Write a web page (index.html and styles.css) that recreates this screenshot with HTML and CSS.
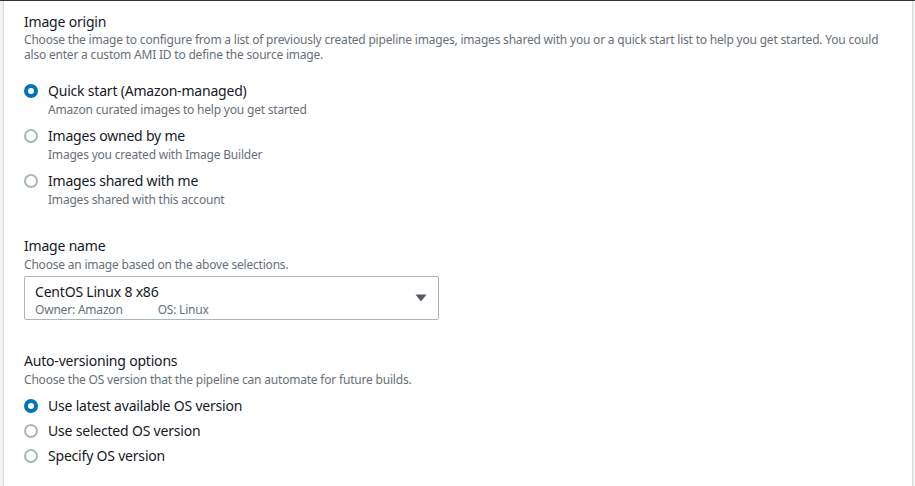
FILE: index.html
```html
<!DOCTYPE html>
<html>
<head>
<meta charset="utf-8">
<link rel="stylesheet" href="styles.css">
</head>
<body>
<div class="page">
  <div class="card">
    <section class="field field-origin">
      <div class="label">Image origin</div>
      <div class="desc">Choose the image to configure from a list of previously created pipeline images, images shared with you or a quick start list to help you get started. You could also enter a custom AMI ID to define the source image.</div>
      <div class="tiles">
        <div class="option">
          <span class="radio checked"></span>
          <div class="opt-text">
            <div class="opt-label">Quick start (Amazon-managed)</div>
            <div class="opt-desc">Amazon curated images to help you get started</div>
          </div>
        </div>
        <div class="option">
          <span class="radio"></span>
          <div class="opt-text">
            <div class="opt-label">Images owned by me</div>
            <div class="opt-desc">Images you created with Image Builder</div>
          </div>
        </div>
        <div class="option">
          <span class="radio"></span>
          <div class="opt-text">
            <div class="opt-label">Images shared with me</div>
            <div class="opt-desc">Images shared with this account</div>
          </div>
        </div>
      </div>
    </section>

    <section class="field field-name">
      <div class="label">Image name</div>
      <div class="desc">Choose an image based on the above selections.</div>
      <div class="select">
        <div class="sel-text">
          <div class="sel-main">CentOS Linux 8 x86</div>
          <div class="sel-tags"><span>Owner: Amazon</span><span>OS: Linux</span></div>
        </div>
        <svg class="caret" width="12" height="8" viewBox="0 0 12 8"><path d="M0.5 0.5 H11.5 L6 7.5 Z" fill="#545b64"/></svg>
      </div>
    </section>

    <section class="field field-auto">
      <div class="label">Auto-versioning options</div>
      <div class="desc">Choose the OS version that the pipeline can automate for future builds.</div>
      <div class="simple">
        <div class="option small"><span class="radio checked"></span><div class="opt-label">Use latest available OS version</div></div>
        <div class="option small"><span class="radio"></span><div class="opt-label">Use selected OS version</div></div>
        <div class="option small"><span class="radio"></span><div class="opt-label">Specify OS version</div></div>
      </div>
    </section>
  </div>
</div>
</body>
</html>
```
FILE: styles.css
```css
html, body {
  margin: 0;
  padding: 0;
  height: 100%;
}
body {
  background: #f2f3f3;
  font-family: "Noto Sans", "Open Sans", sans-serif;
  color: #16191f;
  letter-spacing: -0.2px;
}
.page {
  height: 100%;
  border-top: 1px solid #2f3640;
  padding: 0 2px 0 3px;
  box-sizing: border-box;
}
.card {
  height: 100%;
  background: #fff;
  border-left: 1px solid #d5dbdb;
  border-right: 1px solid #d5dbdb;
  padding: 11px 20px 0 20px;
  box-sizing: border-box;
}
.field {
  display: flex;
  flex-direction: column;
}
.label {
  font-size: 14px;
  line-height: 22px;
  color: #16191f;
}
.field-origin .label {
  line-height: 20px;
}
.desc {
  font-size: 12px;
  line-height: 15px;
  color: #687078;
}
.tiles {
  margin-top: 18px;
  display: flex;
  flex-direction: column;
  gap: 7px;
}
.option {
  display: flex;
  align-items: flex-start;
  gap: 10px;
}
.radio {
  flex: none;
  width: 14px;
  height: 14px;
  margin-top: 4px;
  border-radius: 50%;
  border: 2px solid #aab7b8;
  box-sizing: border-box;
  background: #fff;
}
.radio.checked {
  border: 4px solid #0073bb;
}
.opt-label {
  font-size: 14px;
  line-height: 22px;
  color: #16191f;
}
.opt-desc {
  font-size: 12px;
  line-height: 16px;
  color: #687078;
}
.field-name {
  margin-top: 27px;
}
.select {
  margin-top: 4px;
  width: 415px;
  height: 44px;
  box-sizing: border-box;
  border: 1px solid #aab7b8;
  border-radius: 2px;
  display: flex;
  align-items: center;
  justify-content: space-between;
  padding: 0 11px 0 10px;
}
.sel-text {
  align-self: flex-start;
  padding-top: 6px;
}
.sel-main {
  font-size: 14px;
  line-height: 18px;
  color: #16191f;
}
.sel-tags {
  display: flex;
  gap: 35px;
  font-size: 12px;
  line-height: 18px;
  color: #687078;
}
.field-auto {
  margin-top: 30px;
}
.simple {
  margin-top: 8px;
  display: flex;
  flex-direction: column;
  gap: 3px;
}
```
